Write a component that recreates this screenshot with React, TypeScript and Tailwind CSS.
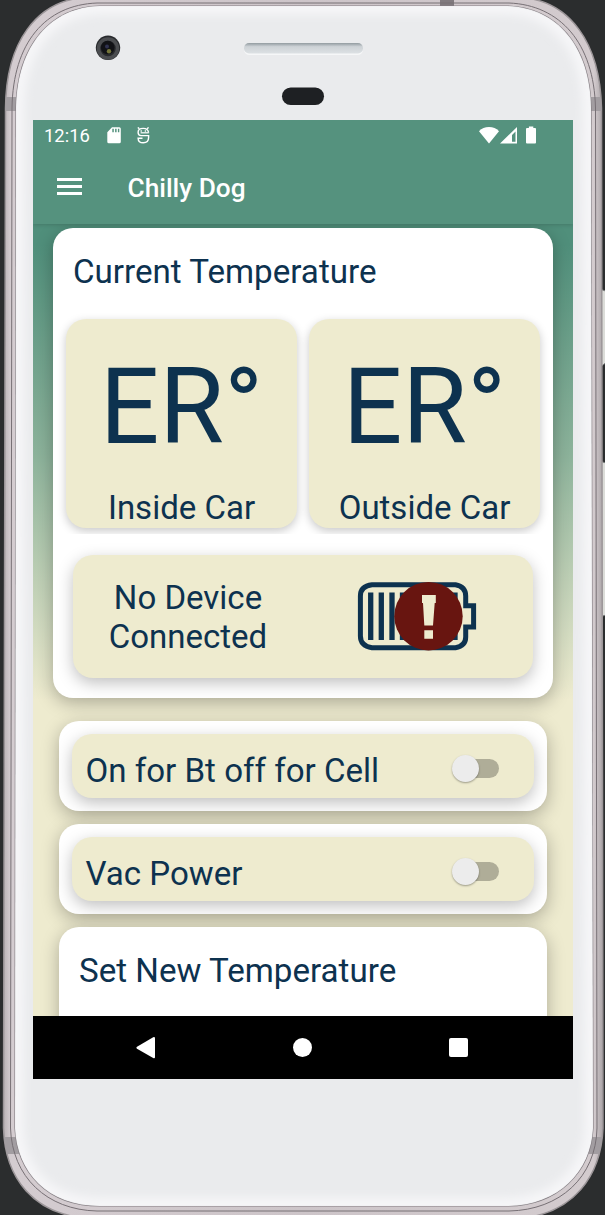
import type { ReactNode } from 'react';

function DeviceShell() {
  const outer =
    'M80 -2 C38 3 6 40 5.5 108 L3.5 1128 C5 1180 35 1213 84 1218 L524 1218 C572 1212 601 1178 603 1128 L601.5 108 C600 40 568 3 526 -2 Z';
  const inner =
    'M100 6 C51 7 17 45 16 108 L15 1128 C17 1172 47 1206 100 1206 L506 1206 C558 1206 591 1172 593 1128 L591 108 C590 45 556 7 506 6 Z';
  const groove =
    'M97 3 C45 5 13 43 12 108 L10.5 1128 C12 1177 47 1210 97 1211 L509 1211 C560 1210 596 1177 597 1128 L595.5 108 C594 43 560 5 509 3 Z';
  return (
    <svg className="absolute inset-0 h-full w-full" viewBox="0 0 605 1215" aria-hidden="true">
      <defs>
        <linearGradient id="metal" x1="0" x2="1" y1="0" y2="0">
          <stop offset="0" stopColor="#b9b2b5" />
          <stop offset="0.012" stopColor="#d4ccd0" />
          <stop offset="0.5" stopColor="#cdc5c9" />
          <stop offset="0.985" stopColor="#d3cbce" />
          <stop offset="1" stopColor="#aaa4a7" />
        </linearGradient>
        <linearGradient id="speaker" x1="0" x2="0" y1="0" y2="1">
          <stop offset="0" stopColor="#929ba0" />
          <stop offset="0.35" stopColor="#cdd2d6" />
          <stop offset="1" stopColor="#dde1e4" />
        </linearGradient>
        <filter id="soft" x="-10%" y="-10%" width="120%" height="120%">
          <feGaussianBlur stdDeviation="5" />
        </filter>
        <clipPath id="face">
          <path d={inner} />
        </clipPath>
        <clipPath id="body">
          <path d={outer} />
        </clipPath>
      </defs>
      <g fill="#dcddd9" stroke="#777a7a" strokeWidth="1">
        <path d="M601 289.5 L605.5 291 L605.5 363 L601 366.5 Z" />
        <path d="M601 461.5 L606 463 L606 615 L601 616.5 Z" />
      </g>
      <path d={outer} fill="url(#metal)" stroke="#9c9699" strokeWidth="1.5" />
      <g clipPath="url(#body)" fill="#a29da1">
        <rect x="440" y="0" width="14" height="6" fill="#817b7f" />
        <rect x="4" y="97" width="13" height="14" />
        <rect x="590" y="97" width="13" height="14" />
        <rect x="3" y="1137" width="16" height="17" />
        <rect x="589" y="1137" width="15" height="17" />
      </g>
      <path d={groove} fill="none" stroke="#777075" strokeWidth="1" />
      <path d={inner} fill="#eaebed" stroke="#837d82" strokeWidth="1.2" />
      <g clipPath="url(#face)">
        <path d={inner} fill="none" stroke="#f6f6f8" strokeWidth="17" filter="url(#soft)" />
      </g>
      <rect x="244" y="43" width="119" height="12" rx="5.5" fill="#f6f7f8" />
      <rect x="244" y="43" width="119" height="10.5" rx="5" fill="url(#speaker)" />
      <circle cx="108" cy="47.8" r="12.2" fill="#27292c" />
      <circle cx="108" cy="48.5" r="9.5" fill="none" stroke="#4b4d50" strokeWidth="3.5" />
      <circle cx="107.7" cy="47.5" r="6.8" fill="#111216" />
      <circle cx="107" cy="46.5" r="2" fill="#303250" />
      <circle cx="109" cy="51.3" r="2.2" fill="#74753a" />
      <rect x="282" y="87.5" width="42" height="17.5" rx="8.7" fill="#1e2023" />
    </svg>
  );
}

function StatusBar() {
  return (
    <div className="flex h-[31px] items-center pl-[11px] pr-[36px] text-white">
      <span className="mt-[1px] w-[63px] text-[18.4px] leading-none">12:16</span>
      <svg className="h-[17px] w-[15px]" viewBox="0 0 15 17">
        <path
          fillRule="evenodd"
          fill="currentColor"
          d="M5 0.2H12.3Q13.8 .2 13.8 1.7V14.8Q13.8 16.3 12.3 16.3H1.8Q.3 16.3 .3 14.8V5.2ZM5.3 1.7V5.2H6.8V1.7ZM8.1 1.7V5.2H9.6V1.7ZM10.9 1.7V5.2H12.3V1.7Z"
        />
      </svg>
      <svg className="ml-[15px] h-[17px] w-[13px]" viewBox="0 0 13 17" fill="none" stroke="currentColor" strokeWidth="1.4">
        <path d="M.8 .5L2.4 1.8M11.6 .5L10 1.8" />
        <path d="M11.6 5.7Q11 1.4 6.2 1.4Q1.1 1.4 1.1 5.3Q1.1 8.6 4 8.6H11.6V10.6Q11.6 15.8 6.3 15.8Q1.2 15.8 1.1 11.2H5.5" />
        <path d="M3.6 5.8H11.7" strokeWidth="1.2" />
        <path d="M4.2 3.3V4.7M8.4 3.3V4.7" strokeWidth="1.3" />
      </svg>
      <svg className="ml-auto h-[17px] w-[20px]" viewBox="0 0 20 17">
        <path fill="currentColor" d="M0 4.2Q4 0 10 0Q16 0 20 4.2L10 16.5Z" />
      </svg>
      <svg className="ml-[1px] h-[17px] w-[18px]" viewBox="0 0 18 17">
        <path fill="currentColor" fillRule="evenodd" d="M0 16.5L17 0V16.5ZM12 8V14.8H15.5V4.5Z" />
      </svg>
      <svg className="-mt-[1px] ml-[8px] h-[18px] w-[11px]" viewBox="0 0 11 18">
        <path fill="currentColor" d="M2.9 .5H7.3V2H9.1Q10 2 10 3V16.5Q10 17.5 9.1 17.5H1Q0 17.5 0 16.5V3Q0 2 1 2H2.9Z" />
      </svg>
    </div>
  );
}

function AppBar() {
  return (
    <header className="relative z-10 h-[104px] shrink-0 bg-[#55927e] shadow-[0_1px_4px_rgba(0,0,0,0.16)]">
      <StatusBar />
      <div className="flex h-[73px] items-center pl-[24px] text-white">
        <button aria-label="Menu" className="-mt-[2px] flex w-[25px] flex-col gap-[4px]">
          <span className="h-[3px] bg-white" />
          <span className="h-[3px] bg-white" />
          <span className="h-[3px] bg-white" />
        </button>
        <h1 className="ml-[45.5px] mt-[1px] text-[26.25px] font-medium leading-8">Chilly Dog</h1>
      </div>
    </header>
  );
}

function Reading({ value, label }: { value: string; label: string }) {
  return (
    <div className="flex h-[209px] flex-1 flex-col items-center rounded-[20px] bg-[#eeebcf] pt-[27px] shadow-[0_3px_10px_rgba(0,0,0,0.22)]">
      <div className="text-[105px] leading-[123px]">{value}</div>
      <div className="mt-[20px] whitespace-nowrap text-[33px] leading-[38px]">{label}</div>
    </div>
  );
}

function BatteryAlert() {
  return (
    <svg className="h-[70px] w-[120px]" viewBox="0 0 120 70">
      <path
        d="M15 2.7H98.5Q108.7 4.5 108.7 14V23.7H116.6V45H108.7V55Q108.7 64 98.5 65.7H15Q3.4 64 3.4 54V14Q3.4 4 15 2.7Z"
        fill="none"
        stroke="#0d324f"
        strokeWidth="5"
      />
      <path d="M13.7 10.5V58M24.3 10.5V58M35 10.5V58M45.5 10.5V58M98 10.5V58" stroke="#0d324f" strokeWidth="5.3" />
      <circle cx="71.5" cy="34.2" r="34.2" fill="#681510" />
      <path d="M65 13H78.8V21H77.7L76 43.5H67.3L66 21H65ZM67.3 48.3H76V56.7H67.3Z" fill="#eeebcf" />
    </svg>
  );
}

function Panel({ children }: { children: ReactNode }) {
  return (
    <div className="ml-[26px] mr-[26px] h-[90px] shrink-0 rounded-[20px] bg-white px-[13px] pt-[13px] shadow-[0_5px_18px_rgba(0,0,0,0.28)]">
      {children}
    </div>
  );
}

function SwitchRow({ label }: { label: string }) {
  return (
    <Panel>
      <label className="flex h-[64px] items-center rounded-[20px] bg-[#eeebcf] pl-[13.5px] pr-[35px] shadow-[0_5px_16px_rgba(0,0,0,0.25)]">
        <span className="mt-[9px] text-[33.1px] leading-[38px]">{label}</span>
        <span role="switch" aria-checked="false" className="ml-auto mt-[5px] flex h-[19px] w-[42px] items-center rounded-full bg-[#afad98]">
          <span className="-ml-[5px] h-[27px] w-[27px] shrink-0 rounded-full bg-[#ececec] shadow-[0_1px_2px_rgba(0,0,0,0.35)]" />
        </span>
      </label>
    </Panel>
  );
}

function NavigationBar() {
  return (
    <nav className="z-10 flex h-[63px] shrink-0 items-center bg-black px-[102px] text-white">
      <svg className="h-[22px] w-[21px]" viewBox="0 0 21 22" fill="currentColor">
        <path d="M18.2 .2Q20 -.3 20 1.2V20.2Q20 21.7 18.2 21L2 11.7Q.8 10.7 2 9.7Z" />
      </svg>
      <span className="ml-[137px] h-[19px] w-[19px] rounded-full bg-white" />
      <span className="ml-[136.5px] h-[19.5px] w-[19.5px] rounded-[2px] bg-white" />
    </nav>
  );
}

export default function App() {
  return (
    <div className="relative h-[1215px] w-[605px] overflow-hidden bg-[#2b2d2e] pt-[120px] font-['Roboto',sans-serif] text-[#0d324f]">
      <DeviceShell />
      <main className="relative ml-[33px] flex h-[959px] w-[540px] flex-col overflow-hidden bg-[linear-gradient(to_bottom,#508f7b_125px,#8db39b_336px,#eeebcf_580px)]">
        <AppBar />
        <div className="flex min-h-0 flex-1 flex-col overflow-hidden pt-[4px]">
          <section className="mx-[20px] h-[470px] shrink-0 rounded-[20px] bg-white shadow-[0_5px_18px_rgba(0,0,0,0.28)]">
            <h2 className="h-[84px] pl-[20px] pt-[25px] text-[33.15px] leading-[38px]">Current Temperature</h2>
            <div className="flex h-[222px] gap-[12px] overflow-hidden px-[13px] pt-[7px]">
              <Reading value="ER°" label="Inside Car" />
              <Reading value="ER°" label="Outside Car" />
            </div>
            <div className="mx-[20px] mt-[21px] flex h-[123px] items-center rounded-[20px] bg-[#eeebcf] shadow-[0_5px_16px_rgba(0,0,0,0.25)]">
              <div className="mt-[2px] w-[230px] text-center text-[33px] leading-[38.5px]">
                No Device
                <br />
                Connected
              </div>
              <div className="ml-[54px]">
                <BatteryAlert />
              </div>
            </div>
          </section>
          <div className="flex flex-col gap-[13px] pt-[23px]">
            <SwitchRow label="On for Bt off for Cell" />
            <SwitchRow label="Vac Power" />
            <section className="mx-[26px] h-[180px] shrink-0 rounded-[20px] bg-white pl-[20px] pt-[25px] shadow-[0_5px_18px_rgba(0,0,0,0.28)]">
              <h2 className="text-[33.15px] leading-[38px]">Set New Temperature</h2>
            </section>
          </div>
        </div>
        <NavigationBar />
      </main>
    </div>
  );
}
